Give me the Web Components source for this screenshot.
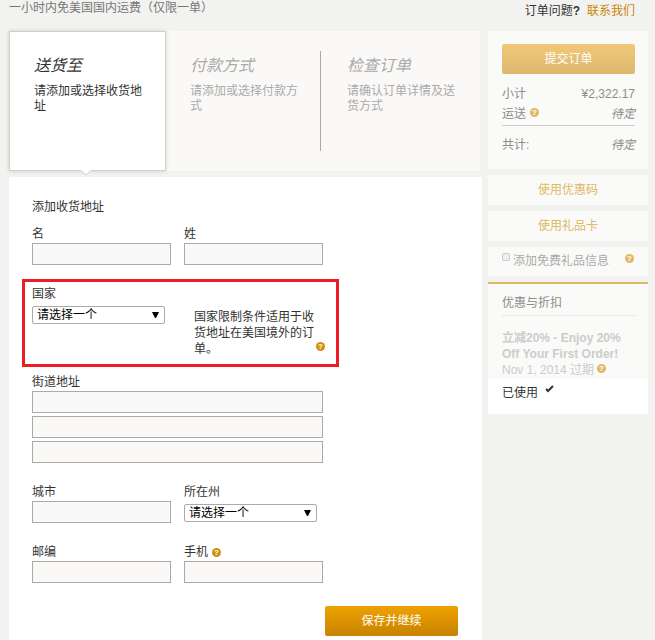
<!DOCTYPE html>
<html lang="zh-CN">
<head>
<meta charset="utf-8">
<meta name="viewport" content="width=device-width, initial-scale=1">
<title>结账</title>
<style>
  body {
    margin: 0;
    background: #f2f2f0;
    color: #333;
    font: 12px/16px "Liberation Sans", "Noto Sans CJK SC", sans-serif;
  }
</style>
</head>
<body>
<checkout-page>
  <page-header slot="header" notice="一小时内免美国国内运费（仅限一单）"></page-header>

  <step-list>
    <checkout-step active heading="送货至">请添加或选择收货地址</checkout-step>
    <checkout-step divider heading="付款方式">请添加或选择付款方式</checkout-step>
    <checkout-step heading="检查订单">请确认订单详情及送货方式</checkout-step>
  </step-list>
  <address-form></address-form>

  <side-card slot="side"><order-summary></order-summary></side-card>
  <promo-link slot="side">使用优惠码</promo-link>
  <promo-link slot="side">使用礼品卡</promo-link>
  <gift-option slot="side"></gift-option>
  <promo-list slot="side"></promo-list>
</checkout-page>

<script>
class CheckoutPage extends HTMLElement {
  constructor() {
    super();
    this.attachShadow({ mode: "open" });
  }

  connectedCallback() {
    this.shadowRoot.innerHTML = `
      <style>
        :host {
          box-sizing: border-box;
          min-height: 100vh;
          padding: 0 7px 0 9px;
          display: flex;
          flex-direction: column;
        }
        .columns {
          flex: 1;
          display: grid;
          grid-template-columns: minmax(0, 1fr) 160px;
          gap: 6px;
        }
        main, aside {
          display: flex;
          flex-direction: column;
          gap: 6px;
        }
      </style>
      <slot name="header"></slot>
      <div class="columns">
        <main><slot></slot></main>
        <aside><slot name="side"></slot></aside>
      </div>
    `;
  }
}

class PageHeader extends HTMLElement {
  constructor() {
    super();
    this.attachShadow({ mode: "open" });
  }

  connectedCallback() {
    this.shadowRoot.innerHTML = `
      <style>
        :host {
          display: flex;
          justify-content: space-between;
          height: 31px;
          padding-right: 13px;
        }
        .notice {
          color: #777;
        }
        .contact {
          display: flex;
          gap: 7px;
          padding-top: 3px;
        }
        a {
          color: #c98500;
          text-decoration: none;
        }
      </style>
      <span class="notice">${this.getAttribute("notice")}</span>
      <div class="contact">
        <span>订单问题<b>?</b></span>
        <a href="#contact">联系我们</a>
      </div>
    `;
  }
}

class StepList extends HTMLElement {
  constructor() {
    super();
    this.attachShadow({ mode: "open" });
  }

  connectedCallback() {
    this.shadowRoot.innerHTML = `
      <style>
        :host {
          display: grid;
          grid-template-columns: repeat(3, minmax(0, 1fr));
          min-height: 140px;
          margin-right: 2px;
          background: #faf9f7;
        }
      </style>
      <slot></slot>
    `;
  }
}

class CheckoutStep extends HTMLElement {
  constructor() {
    super();
    this.attachShadow({ mode: "open" });
  }

  connectedCallback() {
    const pointer = this.hasAttribute("active")
      ? `<svg class="pointer" width="12" height="6" viewBox="0 0 12 6" aria-hidden="true">
           <path d="M0 0h12L6 5z" fill="#fff"/>
           <path d="M1 .5l5 4.500l5-4.500" fill="none" stroke="#d0d0c8"/>
         </svg>`
      : "";

    this.shadowRoot.innerHTML = `
      <style>
        :host {
          box-sizing: border-box;
          display: flex;
          position: relative;
          padding: 20px 2px 20px 0;
          color: #aaa;
        }
        :host([active]) {
          padding: 19px 1px 19px 0;
          background: #fff;
          border: 1px solid #d0d0c8;
          box-shadow: 0 0 4px rgba(0, 0, 0, 0.15);
          color: #333;
        }
        .inner {
          flex: 1;
          padding: 0 20px 0 24px;
        }
        :host([divider]) .inner {
          border-right: 1px solid #aaa;
        }
        h2 {
          margin: 0;
          font-size: 16px;
          font-weight: normal;
          font-style: italic;
          line-height: 30px;
        }
        p {
          margin: 3px 0 0;
          line-height: 15px;
        }
        .pointer {
          position: absolute;
          top: 100%;
          left: 50%;
          margin-left: -8px;
        }
      </style>
      <div class="inner">
        <h2>${this.getAttribute("heading")}</h2>
        <p><slot></slot></p>
      </div>
      ${pointer}
    `;
  }
}

class HelpTip extends HTMLElement {
  constructor() {
    super();
    this.attachShadow({ mode: "open" });
  }

  connectedCallback() {
    this.shadowRoot.innerHTML = `
      <style>
        :host {
          display: inline-flex;
          flex: none;
        }
        button {
          width: 9px;
          height: 9px;
          padding: 0;
          border: 0;
          border-radius: 50%;
          background: #d08f0c;
          color: #fff;
          font: bold 8px/9px "Liberation Sans", sans-serif;
          text-align: center;
          cursor: pointer;
        }
        :host([faded]) button {
          background: #dfb863;
        }
      </style>
      <button type="button">?</button>
    `;
  }
}

class GoldButton extends HTMLElement {
  constructor() {
    super();
    this.attachShadow({ mode: "open" });
  }

  connectedCallback() {
    this.shadowRoot.innerHTML = `
      <style>
        :host {
          display: block;
        }
        button {
          display: block;
          width: 100%;
          height: 30px;
          padding: 0;
          border: 0;
          border-radius: 2px;
          background: linear-gradient(#eea200, #c78200);
          color: #fff;
          font: inherit;
          cursor: pointer;
        }
        :host([faded]) button {
          background: linear-gradient(#f0c878, #dcb870);
        }
      </style>
      <button type="button"><slot></slot></button>
    `;
  }
}

class TextField extends HTMLElement {
  constructor() {
    super();
    this.attachShadow({ mode: "open" });
  }

  connectedCallback() {
    const label = this.getAttribute("label");
    const rows = Number(this.getAttribute("rows") || 1);
    const help = this.hasAttribute("help") ? "<help-tip></help-tip>" : "";

    let inputs = `<input id="field" type="text">`;
    for (let i = 2; i <= rows; i++) {
      inputs += `<input type="text" aria-label="${label} ${i}">`;
    }

    this.shadowRoot.innerHTML = `
      <style>
        :host {
          display: block;
        }
        .label {
          display: flex;
          align-items: center;
          gap: 4px;
          line-height: 18px;
        }
        .inputs {
          display: grid;
          gap: 3px;
        }
        input {
          box-sizing: border-box;
          width: 100%;
          height: 22px;
          padding: 0 4px;
          border: 1px solid #aaa;
          border-radius: 0;
          background: #faf9f7;
          font: inherit;
        }
      </style>
      <div class="label"><label for="field">${label}</label>${help}</div>
      <div class="inputs">${inputs}</div>
    `;
  }
}

class SelectField extends HTMLElement {
  constructor() {
    super();
    this.attachShadow({ mode: "open" });
  }

  connectedCallback() {
    this.shadowRoot.innerHTML = `
      <style>
        :host {
          display: block;
        }
        label {
          display: block;
          line-height: 18px;
        }
        .row {
          display: flex;
          align-items: flex-start;
          gap: 29px;
          margin-top: 3px;
        }
        .box {
          flex: none;
          display: grid;
          width: 133px;
          align-items: center;
        }
        select, svg {
          grid-area: 1 / 1;
        }
        select {
          box-sizing: border-box;
          width: 100%;
          height: 18px;
          padding: 0 20px 0 4px;
          border: 1px solid #aaa;
          border-radius: 2px;
          background: #fff;
          color: #000;
          font: inherit;
          line-height: 16px;
          appearance: none;
        }
        svg {
          justify-self: end;
          margin-right: 6px;
          pointer-events: none;
        }
      </style>
      <label for="field">${this.getAttribute("label")}</label>
      <div class="row">
        <div class="box">
          <select id="field"><option>请选择一个</option></select>
          <svg width="7" height="6" viewBox="0 0 7 6" aria-hidden="true"><path d="M0 0h7L4 6H3z"/></svg>
        </div>
        <slot></slot>
      </div>
    `;
  }
}

class AddressForm extends HTMLElement {
  constructor() {
    super();
    this.attachShadow({ mode: "open" });
  }

  connectedCallback() {
    this.shadowRoot.innerHTML = `
      <style>
        :host {
          flex: 1;
          display: block;
          padding: 22px 24px 4px 23px;
          background: #fff;
        }
        .fields {
          margin-right: 135px;
        }
        h3 {
          margin: 0 0 10px;
          font-size: 12px;
          font-weight: normal;
          line-height: 16px;
        }
        .pair {
          display: grid;
          grid-template-columns: 1fr 1fr;
          gap: 13px;
          margin-top: 20px;
        }
        h3 + .pair {
          margin-top: 0;
        }
        .marked {
          margin: 14px -16px 6px -10px;
          padding: 3px 11px 7px 7px;
          border: 3px solid #ee1c24;
        }
        .note {
          flex: 1;
          display: flex;
          align-items: flex-end;
          padding-top: 3px;
        }
        .note span {
          flex: 1;
        }
        .note help-tip {
          margin-bottom: 6px;
        }
        gold-button {
          width: 133px;
          margin: 23px 0 0 auto;
        }
      </style>
      <form>
        <div class="fields">
          <h3>添加收货地址</h3>
          <div class="pair">
            <text-field label="名"></text-field>
            <text-field label="姓"></text-field>
          </div>
          <div class="marked">
            <select-field label="国家">
              <div class="note">
                <span>国家限制条件适用于收货地址在美国境外的订单。</span>
                <help-tip></help-tip>
              </div>
            </select-field>
          </div>
          <text-field label="街道地址" rows="3"></text-field>
          <div class="pair">
            <text-field label="城市"></text-field>
            <select-field label="所在州"></select-field>
          </div>
          <div class="pair">
            <text-field label="邮编"></text-field>
            <text-field label="手机" help></text-field>
          </div>
        </div>
        <gold-button>保存并继续</gold-button>
      </form>
    `;
  }
}

class SideCard extends HTMLElement {
  constructor() {
    super();
    this.attachShadow({ mode: "open" });
  }

  connectedCallback() {
    this.shadowRoot.innerHTML = `
      <style>
        :host {
          display: block;
          padding: 13px 13px 14px 14px;
          background: #fafaf8;
        }
      </style>
      <slot></slot>
    `;
  }
}

class OrderSummary extends HTMLElement {
  constructor() {
    super();
    this.attachShadow({ mode: "open" });
  }

  connectedCallback() {
    this.shadowRoot.innerHTML = `
      <style>
        :host {
          display: block;
          color: #8c8c8a;
          line-height: 20px;
        }
        dl {
          margin: 10px 0 0;
        }
        dl div {
          display: flex;
          justify-content: space-between;
        }
        dt {
          display: flex;
          align-items: center;
          gap: 4px;
        }
        dt help-tip {
          margin-bottom: 4px;
        }
        dd {
          margin: 0;
        }
        dl .total {
          margin-top: 1px;
          padding-top: 9px;
          border-top: 1px solid #ccc;
        }
      </style>
      <gold-button faded>提交订单</gold-button>
      <dl>
        <div><dt>小计</dt><dd>¥2,322.17</dd></div>
        <div><dt>运送<help-tip faded></help-tip></dt><dd><i>待定</i></dd></div>
        <div class="total"><dt>共计:</dt><dd><i>待定</i></dd></div>
      </dl>
    `;
  }
}

class PromoLink extends HTMLElement {
  constructor() {
    super();
    this.attachShadow({ mode: "open" });
  }

  connectedCallback() {
    this.shadowRoot.innerHTML = `
      <style>
        :host {
          display: block;
          background: #fafaf8;
          line-height: 30px;
          text-align: center;
        }
        a {
          display: block;
          color: #dfb863;
          text-decoration: none;
        }
      </style>
      <a href="#promo"><slot></slot></a>
    `;
  }
}

class GiftOption extends HTMLElement {
  constructor() {
    super();
    this.attachShadow({ mode: "open" });
  }

  connectedCallback() {
    this.shadowRoot.innerHTML = `
      <style>
        :host {
          display: flex;
          align-items: flex-start;
          height: 29px;
          padding: 0 14px;
          background: #fafaf8;
          color: #aaa;
        }
        input {
          appearance: none;
          width: 8px;
          height: 8px;
          margin: 6px 3px 0 0;
          border: 1px solid #ccc;
          border-radius: 2px;
          background: #eee;
          box-sizing: border-box;
        }
        label {
          flex: 1;
          line-height: 29px;
        }
        help-tip {
          margin-top: 7px;
        }
      </style>
      <input type="checkbox" id="gift">
      <label for="gift">添加免费礼品信息</label>
      <help-tip faded></help-tip>
    `;
  }
}

class PromoList extends HTMLElement {
  constructor() {
    super();
    this.attachShadow({ mode: "open" });
  }

  connectedCallback() {
    this.shadowRoot.innerHTML = `
      <style>
        :host {
          display: block;
          border-top: 2px solid #dfb863;
        }
        .offers {
          padding: 11px 13px 1px 14px;
          background: #fafaf8;
        }
        h3 {
          margin: 0 0 14px;
          padding-bottom: 4px;
          border-bottom: 1px solid #e6e6e4;
          color: #8c8c8a;
          font-size: 12px;
          font-weight: normal;
        }
        p {
          margin: 0;
          color: #ccc;
        }
        .expiry {
          display: flex;
          align-items: center;
          gap: 3px;
        }
        .expiry help-tip {
          margin-bottom: 4px;
        }
        .used {
          display: flex;
          gap: 7px;
          padding: 6px 14px 13px;
          background: #fff;
        }
      </style>
      <div class="offers">
        <h3>优惠与折扣</h3>
        <p><b>立减20% - Enjoy 20% Off Your First Order!</b></p>
        <p class="expiry">Nov 1, 2014 过期<help-tip faded></help-tip></p>
      </div>
      <div class="used">
        <span>已使用</span>
        <svg width="9" height="8" viewBox="0 0 9 8" aria-hidden="true">
          <path d="M1 4l2 2l5-5" fill="none" stroke="#333" stroke-width="2"/>
        </svg>
      </div>
    `;
  }
}

customElements.define("checkout-page", CheckoutPage);
customElements.define("page-header", PageHeader);
customElements.define("step-list", StepList);
customElements.define("checkout-step", CheckoutStep);
customElements.define("help-tip", HelpTip);
customElements.define("gold-button", GoldButton);
customElements.define("text-field", TextField);
customElements.define("select-field", SelectField);
customElements.define("address-form", AddressForm);
customElements.define("side-card", SideCard);
customElements.define("order-summary", OrderSummary);
customElements.define("promo-link", PromoLink);
customElements.define("gift-option", GiftOption);
customElements.define("promo-list", PromoList);
</script>
</body>
</html>
